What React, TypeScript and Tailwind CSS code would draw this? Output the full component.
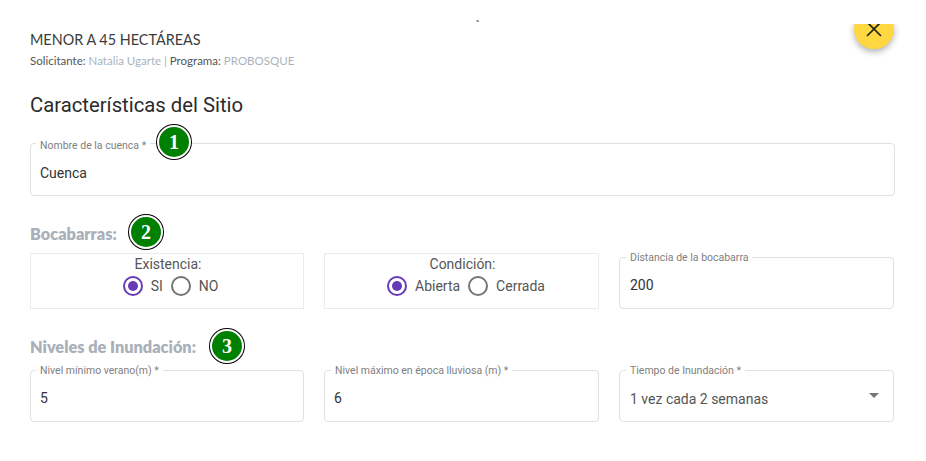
import { X } from 'lucide-react';

const nunito = "font-['Lato','Noto_Sans',sans-serif]";

function Badge({ n, className }: { n: number; className: string }) {
  return (
    <span className={`absolute flex h-[34px] w-[34px] items-center justify-center rounded-full border-2 border-white bg-[#008000] font-['Liberation_Serif',serif] text-[20px] font-bold leading-none text-white shadow-[0_0_0_1px_#000] ${className}`}>
      {n}
    </span>
  );
}

function Field({ label, value, className, labelClass = 'left-[6px] top-[-7px]', select }: { label: string; value: string; className: string; labelClass?: string; select?: boolean }) {
  return (
    <div className={`relative rounded border border-[#e0e0e0] pr-3 ${className}`}>
      <span className={`absolute bg-white px-1 text-[10.5px] leading-[13px] text-[#808080] ${labelClass}`}>{label}</span>
      <span className={`block text-sm leading-5 ${select ? 'text-[#555]' : 'text-[#333]'}`}>{value}</span>
      {select && <span className="absolute right-[14px] top-[22px] h-0 w-0 border-x-[5px] border-t-[5px] border-x-transparent border-t-[#757575]" />}
    </div>
  );
}

function Radio({ label, checked }: { label: string; checked?: boolean }) {
  return (
    <span className="flex items-center gap-2">
      <span className={`flex h-5 w-5 items-center justify-center rounded-full border-2 ${checked ? 'border-[#673ab7]' : 'border-[#757575]'}`}>
        {checked && <span className="h-[10px] w-[10px] rounded-full bg-[#673ab7]" />}
      </span>
      <span className="text-sm text-[#555]">{label}</span>
    </span>
  );
}

function RadioBox({ title, options, rowClass }: { title: string; options: [string, string]; rowClass: string }) {
  return (
    <div className="flex h-[56px] flex-col items-center border border-[#e8ebef] pt-px">
      <span className="ml-[2px] text-sm leading-[18px] text-[#555]">{title}</span>
      <div className={`mt-[3px] flex items-center gap-2 ${rowClass}`}>
        <Radio label={options[0]} checked />
        <Radio label={options[1]} />
      </div>
    </div>
  );
}

export default function App() {
  return (
    <div className="relative h-[461px] w-[926px] overflow-hidden bg-white font-['Roboto',sans-serif]">
      {/* close button, cut by the dialog edge */}
      <div className="absolute left-[820px] top-[24px] h-[50px] w-[100px] overflow-hidden">
        <div className="absolute left-[34px] top-[-15px] flex h-10 w-10 items-center justify-center rounded-full bg-[#ffd740] shadow-[0_3px_6px_rgba(0,0,0,0.3)]">
          <X size={26} strokeWidth={1.6} className="text-[#222]" />
        </div>
      </div>
      <span className="absolute left-[476px] top-[18px] text-xs text-[#333]">`</span>

      <div className="flex flex-col pl-[30px] pr-[31px] pt-[31px]">
        <p className={`${nunito} text-[14.4px] leading-[18px] text-[#3c3c3c]`}>MENOR A 45 HECTÁREAS</p>
        <p className={`${nunito} mt-[5px] text-[11.5px] leading-[14px] text-[#555]`}>
          Solicitante: <span className="text-[#a9b4c0]">Natalia Ugarte | </span>Programa: <span className="text-[#a9b4c0]">PROBOSQUE</span>
        </p>
        <h2 className="mt-[25px] text-[20.3px] font-normal leading-6 text-[#2b2b2b]">Características del Sitio</h2>

        <div className="relative mt-[26px]">
          <Field label="Nombre de la cuenca *" value="Cuenca" className="h-[53px] pl-[9px] pt-[19px]" labelClass="left-[5px] top-[-5px]" />
          <Badge n={1} className="left-[127px] top-[-18px]" />
        </div>

        <div className="relative mt-[28px] h-[20px]">
          <p className={`${nunito} text-[16.3px] font-extrabold leading-5 text-[#a9b0b9]`}>Bocabarras:</p>
          <Badge n={2} className="left-[99px] top-[-9px]" />
        </div>

        <div className="mt-[9px] grid grid-cols-[274px_275px_275px] items-end gap-5">
          <RadioBox title="Existencia:" options={['SI', 'NO']} rowClass="ml-[7px]" />
          <RadioBox title="Condición:" options={['Abierta', 'Cerrada']} rowClass="ml-[9px]" />
          <Field label="Distancia de la bocabarra" value="200" className="h-[52px] pl-[10px] pt-[17px]" />
        </div>

        <div className="relative mt-[28px] h-[20px]">
          <p className={`${nunito} text-[16.3px] font-extrabold leading-5 text-[#a9b0b9]`}>Niveles de Inundación:</p>
          <Badge n={3} className="left-[180px] top-[-8px]" />
        </div>

        <div className="mt-[13px] grid grid-cols-[274px_275px_275px] gap-5">
          <Field label="Nivel mínimo verano(m) *" value="5" className="h-[52px] pl-[9px] pt-[17px]" labelClass="left-[5px] top-[-7px]" />
          <Field label="Nivel máximo en época lluviosa (m) *" value="6" className="h-[52px] pl-[9px] pt-[17px]" />
          <Field label="Tiempo de Inundación *" value="1 vez cada 2 semanas" className="h-[52px] pl-[10px] pt-[18px]" select />
        </div>
      </div>
    </div>
  );
}
